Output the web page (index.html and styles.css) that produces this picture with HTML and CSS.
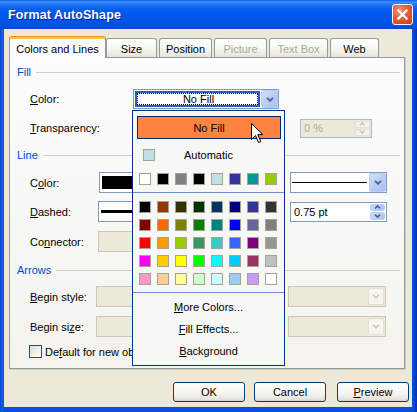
FILE: index.html
```html
<!DOCTYPE html>
<html>
<head>
<meta charset="utf-8">
<title>Format AutoShape</title>
<link rel="stylesheet" href="styles.css">
</head>
<body>
<div class="window">
  <div class="titlebar">
    <span class="title">Format AutoShape</span>
    <span class="close"><svg width="11" height="11" viewBox="0 0 11 11"><path d="M1.5 1.5 L9.5 9.5 M9.5 1.5 L1.5 9.5" stroke="#fff" stroke-width="2.3" stroke-linecap="square"/></svg></span>
  </div>
  <div class="client">
    <div class="tabs">
      <div class="tab active">Colors and Lines</div>
      <div class="tab t-size">Size</div>
      <div class="tab t-pos">Position</div>
      <div class="tab t-pic disabled">Picture</div>
      <div class="tab t-tb disabled">Text Box</div>
      <div class="tab t-web">Web</div>
    </div>
    <div class="panel">
      <div class="group g-fill"><span class="gtitle">Fill</span><span class="gline"></span></div>
      <div class="row r-fillcolor">
        <span class="label lw-fill"><u>C</u>olor:</span>
        <div class="combo fillcombo">
          <div class="focusfield"><span class="dotted">No Fill</span></div>
          <span class="arrowbtn"><svg width="8" height="5" viewBox="0 0 8 5"><path d="M1 0.8 L4 3.8 L7 0.8" fill="none" stroke="#4D6185" stroke-width="1.8"/></svg></span>
        </div>
      </div>
      <div class="row r-trans">
        <span class="label lw-fill"><u>T</u>ransparency:</span>
        <div class="spin transspin disabled">
          <span class="spintext">0 %</span>
          <span class="spinbtns">
            <span class="sbtn"><svg width="7" height="4" viewBox="0 0 7 4"><path d="M1 3.4 L3.5 0.9 L6 3.4" fill="none" stroke="#C9C7BA" stroke-width="1.4"/></svg></span>
            <span class="sbtn"><svg width="7" height="4" viewBox="0 0 7 4"><path d="M1 0.6 L3.5 3.1 L6 0.6" fill="none" stroke="#C9C7BA" stroke-width="1.4"/></svg></span>
          </span>
        </div>
      </div>
      <div class="group g-line"><span class="gtitle">Line</span><span class="gline"></span></div>
      <div class="row r-linecolor">
        <span class="label lw-line">C<u>o</u>lor:</span>
        <div class="combo lcolor"><span class="blackfill"></span></div>
        <span class="rspace"></span>
        <div class="combo stylecombo">
          <span class="linepreview"><span class="thinline"></span></span>
          <span class="arrowbtn"><svg width="8" height="5" viewBox="0 0 8 5"><path d="M1 0.8 L4 3.8 L7 0.8" fill="none" stroke="#4D6185" stroke-width="1.8"/></svg></span>
        </div>
      </div>
      <div class="row r-dashed">
        <span class="label lw-line2"><u>D</u>ashed:</span>
        <div class="combo dashcombo"><span class="thickline"></span></div>
        <span class="rspace"></span>
        <div class="spin weightspin">
          <span class="spintext">0.75 pt</span>
          <span class="spinbtns">
            <span class="sbtn active"><svg width="7" height="4" viewBox="0 0 7 4"><path d="M1 3.4 L3.5 0.9 L6 3.4" fill="none" stroke="#4D6185" stroke-width="1.5"/></svg></span>
            <span class="sbtn active"><svg width="7" height="4" viewBox="0 0 7 4"><path d="M1 0.6 L3.5 3.1 L6 0.6" fill="none" stroke="#4D6185" stroke-width="1.5"/></svg></span>
          </span>
        </div>
      </div>
      <div class="row r-conn">
        <span class="label lw-line2">Co<u>n</u>nector:</span>
        <div class="dbox connbox"></div>
      </div>
      <div class="group g-arrows"><span class="gtitle">Arrows</span><span class="gline"></span></div>
      <div class="row r-bstyle">
        <span class="label lw-arrow"><u>B</u>egin style:</span>
        <div class="dbox abox"></div>
        <span class="rspace2"></span>
        <div class="dbox dcombo">
          <span class="darrow"><svg width="8" height="5" viewBox="0 0 8 5"><path d="M1 0.8 L4 3.8 L7 0.8" fill="none" stroke="#C9C7BA" stroke-width="1.6"/></svg></span>
        </div>
      </div>
      <div class="row r-bsize">
        <span class="label lw-arrow">Begin si<u>z</u>e:</span>
        <div class="dbox abox"></div>
        <span class="rspace2"></span>
        <div class="dbox dcombo">
          <span class="darrow"><svg width="8" height="5" viewBox="0 0 8 5"><path d="M1 0.8 L4 3.8 L7 0.8" fill="none" stroke="#C9C7BA" stroke-width="1.6"/></svg></span>
        </div>
      </div>
      <div class="row r-check">
        <span class="checkbox"></span>
        <span class="checklabel">De<u>f</u>ault for new ob</span>
      </div>
    </div>
    <div class="buttons">
      <span class="btn b-ok">OK</span>
      <span class="btn b-cancel">Cancel</span>
      <span class="btn"><u>P</u>review</span>
    </div>
  </div>

  <div class="popup">
    <div class="nofill">No Fill</div>
    <div class="auto"><span class="sw autosw"></span><span class="autotext">Automatic</span></div>
    <div class="swrow">
      <span class="sw" style="background:#FFFFFF"></span>
      <span class="sw" style="background:#000000"></span>
      <span class="sw" style="background:#808080"></span>
      <span class="sw" style="background:#000000"></span>
      <span class="sw" style="background:#BFE1E6"></span>
      <span class="sw" style="background:#333399"></span>
      <span class="sw" style="background:#009999"></span>
      <span class="sw" style="background:#99CC00"></span>
    </div>
    <div class="sep"></div>
    <div class="swgrid">
      <span class="sw" style="background:#000000"></span>
      <span class="sw" style="background:#993300"></span>
      <span class="sw" style="background:#333300"></span>
      <span class="sw" style="background:#003300"></span>
      <span class="sw" style="background:#003366"></span>
      <span class="sw" style="background:#000080"></span>
      <span class="sw" style="background:#333399"></span>
      <span class="sw" style="background:#333333"></span>
      <span class="sw" style="background:#800000"></span>
      <span class="sw" style="background:#FF6600"></span>
      <span class="sw" style="background:#808000"></span>
      <span class="sw" style="background:#008000"></span>
      <span class="sw" style="background:#008080"></span>
      <span class="sw" style="background:#0000FF"></span>
      <span class="sw" style="background:#666699"></span>
      <span class="sw" style="background:#808080"></span>
      <span class="sw" style="background:#FF0000"></span>
      <span class="sw" style="background:#FF9900"></span>
      <span class="sw" style="background:#99CC00"></span>
      <span class="sw" style="background:#339966"></span>
      <span class="sw" style="background:#33CCCC"></span>
      <span class="sw" style="background:#3366FF"></span>
      <span class="sw" style="background:#800080"></span>
      <span class="sw" style="background:#969696"></span>
      <span class="sw" style="background:#FF00FF"></span>
      <span class="sw" style="background:#FFCC00"></span>
      <span class="sw" style="background:#FFFF00"></span>
      <span class="sw" style="background:#00FF00"></span>
      <span class="sw" style="background:#00FFFF"></span>
      <span class="sw" style="background:#00CCFF"></span>
      <span class="sw" style="background:#993366"></span>
      <span class="sw" style="background:#C0C0C0"></span>
      <span class="sw" style="background:#FF99CC"></span>
      <span class="sw" style="background:#FFCC99"></span>
      <span class="sw" style="background:#FFFF99"></span>
      <span class="sw" style="background:#CCFFCC"></span>
      <span class="sw" style="background:#CCFFFF"></span>
      <span class="sw" style="background:#99CCFF"></span>
      <span class="sw" style="background:#CC99FF"></span>
      <span class="sw" style="background:#FFFFFF"></span>
    </div>
    <div class="sep"></div>
    <div class="mitem"><u>M</u>ore Colors...</div>
    <div class="mitem"><u>F</u>ill Effects...</div>
    <div class="mitem"><u>B</u>ackground</div>
  </div>

  <svg class="cursor" width="13" height="21" viewBox="0 0 13 21"><path d="M0.5 0.5 L0.5 16.5 L4.5 12.5 L7.5 19.5 L9.8 18.5 L6.8 11.6 L11.8 11.6 Z" fill="#fff" stroke="#000" stroke-width="1" stroke-linejoin="miter"/></svg>
</div>
</body>
</html>
```

FILE: styles.css
```css
* { box-sizing: border-box; }
html, body { margin: 0; padding: 0; }
body {
  width: 417px;
  height: 412px;
  overflow: hidden;
  font-family: "Liberation Sans", Arial, sans-serif;
  font-size: 11px;
  color: #000;
  background: #0B4BDB;
}
u { text-decoration: underline; text-underline-offset: 1px; }

.window {
  position: relative;
  width: 417px;
  height: 412px;
  background: linear-gradient(to right, #0842C8 0, #1663F0 2px, #0A4EE0 4px, #0A4EE0 412px, #0940CC 415px, #062FA8 417px);
  display: flex;
  flex-direction: column;
}

.titlebar {
  height: 29px;
  flex: none;
  display: flex;
  align-items: center;
  padding-left: 8px;
  background: linear-gradient(to bottom, #0A5BE8 0, #3D92FA 2px, #2677F6 4px, #0861EE 8px, #0058EE 14px, #0055E6 22px, #0051DD 26px, #0049D0 29px);
}
.title {
  color: #fff;
  font-weight: bold;
  font-size: 12.5px;
  text-shadow: 1px 1px 0 #0A1E8C;
  letter-spacing: 0.1px;
  margin-top: 1px;
}
.close {
  margin-left: auto;
  margin-right: 4px;
  width: 21px;
  height: 21px;
  border: 1px solid #fff;
  border-radius: 3px;
  background: radial-gradient(circle at 35% 30%, #EE9678 0, #E0603B 45%, #C63B15 100%);
  display: flex;
  align-items: center;
  justify-content: center;
}

.client {
  flex: 1;
  margin: 0 5px 5px 4px;
  background: #ECE9D8;
  display: flex;
  flex-direction: column;
}

.tabs {
  display: flex;
  align-items: flex-end;
  height: 21px;
  margin: 7px 0 0 5px;
  position: relative;
  z-index: 1;
}
.tab {
  height: 19px;
  border: 1px solid #919B9C;
  border-bottom: none;
  border-radius: 3px 3px 0 0;
  background: linear-gradient(to bottom, #FFFFFF 0, #F7F7F3 50%, #EDEBE3 85%, #E2E0D6 100%);
  display: flex;
  align-items: center;
  justify-content: center;
  padding-top: 1px;
  margin-left: 2px;
}
.tab.active {
  height: 22px;
  width: 97px;
  margin-left: 0;
  margin-bottom: -1px;
  background: #FCFCFE;
  border-top: 1px solid #E68B2C;
  box-shadow: inset 0 2px 0 #FFC83C;
  padding-top: 2px;
}
.t-size { width: 51px; margin-left: 0; }
.t-pos { width: 53px; }
.t-pic { width: 53px; }
.t-tb { width: 59px; }
.t-web { width: 49px; }
.tab.disabled { color: #ACA899; }

.panel {
  margin-left: 5px;
  width: 396px;
  height: 312px;
  border: 1px solid #919B9C;
  box-shadow: 1px 1px 0 #D0CEC0;
  background: linear-gradient(to bottom, #FCFCFE 0%, #F7F7F4 60%, #F4F3EE 100%);
  padding: 0 4px 0 7px;
  display: flex;
  flex-direction: column;
}

.group {
  display: flex;
  align-items: center;
  height: 14px;
  color: #0046D5;
  flex: none;
}
.gline {
  flex: 1;
  height: 1px;
  background: #D0D0BF;
  margin-left: 5px;
}
.g-fill { margin-top: 7px; }
.g-line { margin-top: 10px; }
.g-arrows { margin-top: 11px; }

.row {
  display: flex;
  align-items: center;
  padding-left: 13px;
  flex: none;
}
.r-fillcolor { margin-top: 10px; height: 20px; }
.r-trans { margin-top: 9px; height: 20px; }
.r-linecolor { margin-top: 10px; height: 21px; }
.r-dashed { margin-top: 8px; height: 21px; }
.r-conn { margin-top: 9px; height: 21px; }
.r-bstyle { margin-top: 9px; height: 21px; }
.r-bsize { margin-top: 9px; height: 21px; }
.r-check { margin-top: 8px; height: 13px; padding-left: 12px; }

.label { flex: none; white-space: nowrap; }
.lw-fill { width: 103px; }
.lw-line { width: 69px; }
.lw-line2 { width: 68px; }
.lw-arrow { width: 66px; }
.rspace { width: 90px; flex: none; }
.rspace2 { width: 88px; flex: none; }

.combo {
  display: flex;
  height: 100%;
  border: 1px solid #7F9DB9;
  background: #fff;
  flex: none;
}
.fillcombo { width: 146px; }
.focusfield {
  flex: 1;
  margin: 1px 0 1px 1px;
  border: 2px solid #2C5DC1;
  display: flex;
}
.dotted {
  flex: 1;
  border: 1px dotted #000;
  display: flex;
  align-items: center;
  justify-content: center;
  padding-left: 2px;
}
.arrowbtn {
  width: 17px;
  margin: 0 0 0 1px;
  border: 1px solid #BCCDF5;
  border-radius: 2px;
  background: linear-gradient(135deg, #D3DFFC 0%, #BACDF8 50%, #A9BFF3 100%);
  display: flex;
  align-items: center;
  justify-content: center;
  flex: none;
}

.spin {
  display: flex;
  border: 1px solid #7F9DB9;
  background: #fff;
  flex: none;
}
.spintext { flex: 1; display: flex; align-items: center; padding-left: 3px; }
.spinbtns { width: 16px; display: flex; flex-direction: column; padding: 1px 1px 1px 0; gap: 1px; }
.sbtn {
  flex: 1;
  border-radius: 2px;
  display: flex;
  align-items: center;
  justify-content: center;
  background: #F4F3EE;
  border: 1px solid #E3E1D6;
}
.sbtn.active {
  background: linear-gradient(135deg, #D3DFFC 0%, #BACDF8 50%, #A9BFF3 100%);
  border: 1px solid #BCCDF5;
}
.transspin {
  width: 72px;
  height: 19px;
  margin-left: 167px;
}
.spin.disabled {
  background: #ECE9D8;
  border-color: #A8B8CE;
  color: #ACA899;
}
.weightspin { width: 97px; height: 20px; }

.lcolor { width: 101px; padding: 3px 2px; }
.blackfill { flex: 1; background: #000; }
.stylecombo { width: 97px; }
.linepreview { flex: 1; display: flex; align-items: center; padding: 0 1px; }
.thinline { flex: 1; height: 1px; background: #000; }
.dashcombo { width: 102px; align-items: center; padding: 0 2px; }
.thickline { flex: 1; height: 3px; background: #000; }

.dbox {
  height: 100%;
  border: 1px solid #CAC7B9;
  background: #ECE9D9;
  flex: none;
  display: flex;
  justify-content: flex-end;
}
.connbox { width: 102px; }
.abox { width: 104px; }
.dcombo { width: 98px; }
.darrow {
  width: 16px;
  margin: 1px;
  border-radius: 2px;
  background: #F5F4EF;
  border: 1px solid #E2E0D5;
  display: flex;
  align-items: center;
  justify-content: center;
}

.checkbox {
  width: 13px;
  height: 13px;
  border: 1px solid #1C5180;
  background: linear-gradient(135deg, #DCDCD4 0%, #F2F2EE 60%, #FFFFFF 100%);
  flex: none;
}
.checklabel { margin-left: 3px; white-space: nowrap; }

.buttons {
  display: flex;
  justify-content: flex-end;
  margin-top: 13px;
  padding-right: 3px;
}
.btn {
  width: 72px;
  height: 20px;
  border: 1px solid #003C74;
  border-radius: 3px;
  background: linear-gradient(to bottom, #FFFFFF 0%, #F5F4F0 60%, #E6E3DA 90%, #D6D0C5 100%);
  display: flex;
  align-items: center;
  justify-content: center;
}
.b-ok { margin-right: 9px; }
.b-cancel { margin-right: 11px; }

/* dropdown popup overlays the dialog */
.popup {
  position: absolute;
  left: 132px;
  top: 110px;
  width: 153px;
  height: 256px;
  border: 1px solid #0A2D8E;
  background: #F7F7F6;
  display: flex;
  flex-direction: column;
  z-index: 5;
}
.nofill {
  margin: 5px 3px 0 4px;
  height: 23px;
  background: #FE843F;
  border: 1px solid #0A2470;
  display: flex;
  align-items: center;
  justify-content: center;
  flex: none;
}
.auto {
  margin-top: 6px;
  height: 20px;
  display: grid;
  grid-template-columns: 1fr auto 1fr;
  align-items: center;
  flex: none;
}
.autosw { margin-left: 10px; }
.autotext { grid-column: 2; }
.sw {
  width: 12px;
  height: 12px;
  border: 1px solid #A7A393;
  display: block;
}
.autosw { background: #BFE1E6; }
.swrow {
  margin-top: 8px;
  padding-left: 6px;
  display: flex;
  gap: 6px;
  flex: none;
}
.sep {
  margin-top: 7px;
  height: 1px;
  background: #6D8ECF;
  flex: none;
}
.swgrid {
  margin-top: 8px;
  padding-left: 6px;
  display: grid;
  grid-template-columns: repeat(8, 12px);
  grid-auto-rows: 12px;
  gap: 6px;
  flex: none;
}
.swgrid + .sep { margin-top: 7px; }
.mitem {
  height: 22px;
  display: flex;
  align-items: center;
  justify-content: center;
  flex: none;
}
.sep + .mitem { margin-top: 3px; }

.cursor {
  position: absolute;
  left: 251px;
  top: 123px;
  z-index: 6;
}
```
